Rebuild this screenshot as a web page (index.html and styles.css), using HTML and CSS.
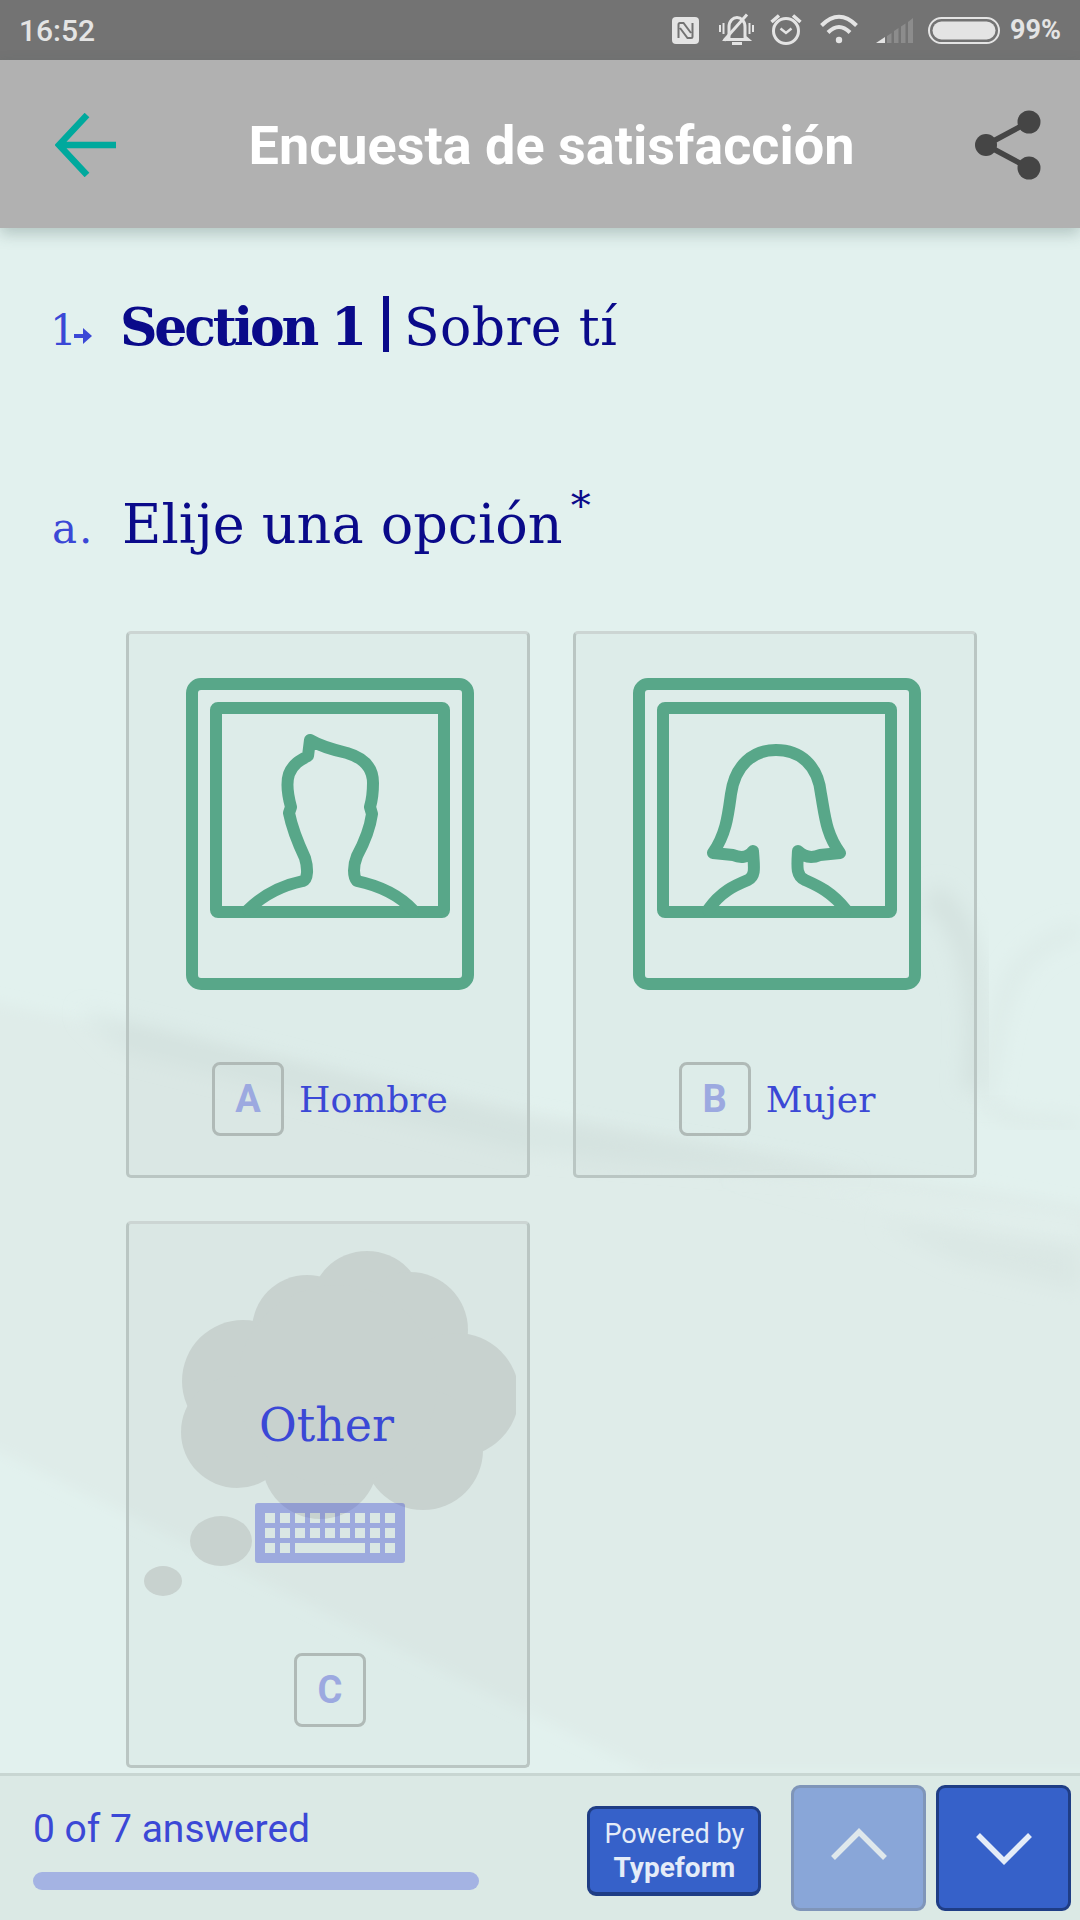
FILE: index.html
```html
<!DOCTYPE html>
<html lang="es">
<head>
    <meta charset="UTF-8">
    <meta name="viewport" content="width=device-width, initial-scale=1.0">
    <title>Encuesta de satisfacción</title>
    <link rel="stylesheet" href="styles.css">
</head>
<body>
<div class="page">
    <!-- washed out photo behind the form -->
    <svg class="backdrop" viewBox="0 0 1080 1920">
        <defs>
            <filter id="soft" x="-20%" y="-20%" width="140%" height="140%"><feGaussianBlur stdDeviation="10"/></filter>
            <filter id="softer" x="-20%" y="-20%" width="140%" height="140%"><feGaussianBlur stdDeviation="7"/></filter>
        </defs>
        <path d="M-40 995 L520 1112 L1120 1212 V1773 H650 L-40 1432Z" fill="#dfecE9" filter="url(#softer)"/>
        <path d="M80 1010 L520 1118 L860 1178 L520 1150 L120 1050Z" fill="#d9e7e4" filter="url(#soft)"/>
        <path d="M700 1178 L1080 1222 V1236 L800 1190Z" fill="#e3f1ee" filter="url(#soft)"/>
        <path d="M880 1222 L1080 1250 V1292 L960 1262Z" fill="#dae7e4" filter="url(#soft)"/>
        <path d="M930 895 C975 925 985 1000 975 1090" fill="none" stroke="#d9e7e4" stroke-width="26" filter="url(#soft)"/>
        <path d="M985 1100 C1000 1000 1005 950 1080 930" fill="none" stroke="#dbe9e6" stroke-width="12" filter="url(#soft)"/>
        <path d="M985 1100 C1010 1130 1040 1120 1080 1125" fill="none" stroke="#dce9e6" stroke-width="12" filter="url(#soft)"/>
    </svg>

    <div class="status-bar">
        <span class="clock">16:52</span>
        <div class="status-icons">
            <svg class="st-nfc" viewBox="0 0 37 60">
                <rect x="0" y="17" width="27" height="27" rx="4" fill="#e4e4e4"/>
                <path d="M6.500 38V24.500c0-1 .6-1.500 1.500-1.500h3.500l7.500 10M20.500 23V36.500c0 1-.6 1.500-1.500 1.500h-3.500l-7.500-10" fill="none" stroke="#737373" stroke-width="2"/>
            </svg>
            <svg class="st-bell" viewBox="0 0 41 60">
                <path d="M10 37V27c0-6 4-9.500 8-9.500s8 3.500 8 9.500V37l3 2.500H7Z" fill="none" stroke="#e4e4e4" stroke-width="3"/>
                <path d="M28 14.500L5 40.500" fill="none" stroke="#e4e4e4" stroke-width="3"/>
                <path d="M1 25v7M4.500 23v11M30.500 23v11M34 25v7" fill="none" stroke="#e4e4e4" stroke-width="2"/>
                <path d="M13 43.500h10" fill="none" stroke="#e4e4e4" stroke-width="3"/>
            </svg>
            <svg class="st-alarm" viewBox="0 0 40 60">
                <circle cx="16" cy="31" r="12.500" fill="none" stroke="#e4e4e4" stroke-width="3"/>
                <path d="M1.500 22L9 15.500M23 15.500L30.500 22" fill="none" stroke="#e4e4e4" stroke-width="3.500"/>
                <path d="M10.500 28.500L16 33L21.500 28.500" fill="none" stroke="#e4e4e4" stroke-width="2.500"/>
            </svg>
            <svg class="st-wifi" viewBox="0 0 46 60">
                <path d="M1.500 25.500Q19 8 36.500 25.500M8 32.500Q19 21.500 30 32.500" fill="none" stroke="#e4e4e4" stroke-width="4"/>
                <circle cx="19" cy="40" r="3.200" fill="#e4e4e4"/>
            </svg>
            <svg class="st-signal" viewBox="0 0 42 60">
                <path d="M0 43L9 37V43Z" fill="#e4e4e4"/>
                <path d="M11 36L15.500 33V43H11ZM18 31L22.500 28V43H18ZM25 26.500L29.500 23.500V43H25ZM32 22L37 18V43H32Z" fill="#8c8c8c"/>
            </svg>
            <svg class="st-battery" viewBox="0 0 72 60">
                <rect x="1" y="18" width="70" height="25" rx="12.500" fill="none" stroke="#e4e4e4" stroke-width="2"/>
                <rect x="4.500" y="21.500" width="63" height="18" rx="9" fill="#e4e4e4"/>
            </svg>
            <span class="battery-pct">99%</span>
        </div>
    </div>

    <header class="app-bar">
        <svg class="back-icon" viewBox="0 0 62 64">
            <path d="M61 32H4M32 2L4 32L32 62" fill="none" stroke="#00a99d" stroke-width="6.500"/>
        </svg>
        <h1 class="app-title">Encuesta de satisfacción</h1>
        <svg class="share-icon" viewBox="0 0 66 70">
            <path d="M11 35L54 12M11 35L54 58" fill="none" stroke="#454545" stroke-width="5.500"/>
            <circle cx="11" cy="35" r="11" fill="#454545"/>
            <circle cx="54" cy="12" r="11.500" fill="#454545"/>
            <circle cx="54" cy="58" r="11.500" fill="#454545"/>
        </svg>
    </header>

    <main class="form">
        <div class="q-row section-row">
            <span class="q-num">1<svg class="num-arrow" viewBox="0 0 18 18"><path d="M0 7H9V1L18 9L9 17V11H0Z" fill="#3b48d6"/></svg></span>
            <span class="q-text"><b>Section 1</b><i class="pipe"></i><span class="q-sub">Sobre tí</span></span>
        </div>
        <div class="q-row question-row">
            <span class="q-num">a.</span>
            <span class="q-text">Elije una opción<sup class="required">*</sup></span>
        </div>

        <div class="choices">
            <div class="choice">
                <svg class="photo" viewBox="0 0 288 312">
                    <rect x="6" y="6" width="276" height="300" rx="9"/>
                    <rect x="30" y="30" width="228" height="204" rx="2"/>
                    <path class="thin" d="M62 232C78 216 98 207 117 203C122 201 122 190 119 180C112 165 106 150 103 135L105 129C102 118 100 105 103 96C107 86 114 82 122 78L124 62C134 68 148 72 161 75C178 80 187 90 187 105C187 115 186 122 184 129L186 136C184 150 178 165 171 178C167 188 167 198 171 203C190 207 212 216 227 232"/>
                </svg>
                <div class="choice-label">
                    <span class="key">A</span>
                    <span class="label-text">Hombre</span>
                </div>
            </div>
            <div class="choice">
                <svg class="photo" viewBox="0 0 288 312">
                    <rect x="6" y="6" width="276" height="300" rx="9"/>
                    <rect x="30" y="30" width="228" height="204" rx="2"/>
                    <path class="thin" d="M75 232C88 213 103 207 115 202C123 198 121 189 120 173C115 180 107 180 100 177L80 175C93 156 95 138 98 116C102 87 120 72 143 72C167 72 185 87 188 116C192 138 193 156 207 175L187 177C180 180 172 180 165 173C164 189 163 198 172 202C183 207 198 213 213 232"/>
                </svg>
                <div class="choice-label">
                    <span class="key">B</span>
                    <span class="label-text">Mujer</span>
                </div>
            </div>
            <div class="choice choice-other">
                <svg class="cloud" viewBox="0 0 390 400">
                    <circle cx="117" cy="160" r="61"/>
                    <circle cx="181" cy="109" r="55"/>
                    <circle cx="241" cy="87" r="57"/>
                    <circle cx="284" cy="109" r="58"/>
                    <circle cx="331" cy="174" r="62"/>
                    <circle cx="111" cy="211" r="56"/>
                    <circle cx="194" cy="240" r="58"/>
                    <circle cx="297" cy="229" r="60"/>
                    <circle cx="211" cy="164" r="100"/>
                    <ellipse cx="95" cy="320" rx="31" ry="25"/>
                    <ellipse cx="37" cy="360" rx="19" ry="15"/>
                </svg>
                <span class="other-text">Other</span>
                <svg class="keyboard" viewBox="0 0 150 60">
                    <path fill-rule="evenodd" d="M3 0H147Q150 0 150 3V57Q150 60 147 60H3Q0 60 0 57V3Q0 0 3 0Z
                        M10 10h10v10h-10ZM25 10h10v10h-10ZM40 10h10v10h-10ZM55 10h10v10h-10ZM70 10h10v10h-10ZM85 10h10v10h-10ZM100 10h10v10h-10ZM115 10h10v10h-10ZM130 10h10v10h-10Z
                        M10 25h10v10h-10ZM25 25h10v10h-10ZM40 25h10v10h-10ZM55 25h10v10h-10ZM70 25h10v10h-10ZM85 25h10v10h-10ZM100 25h10v10h-10ZM115 25h10v10h-10ZM130 25h10v10h-10Z
                        M10 40h10v10h-10ZM25 40h10v10h-10ZM40 40h70v10h-70ZM115 40h10v10h-10ZM130 40h10v10h-10Z"/>
                </svg>
                <span class="key">C</span>
            </div>
        </div>
    </main>

    <footer class="footer">
        <div class="progress">
            <div class="progress-text">0 of 7 answered</div>
            <div class="progress-bar"></div>
        </div>
        <div class="powered">Powered by<b>Typeform</b></div>
        <div class="nav-btn nav-up">
            <svg viewBox="0 0 56 32"><path d="M2 30L28 4L54 30" fill="none" stroke="#dfe8ec" stroke-width="5.500"/></svg>
        </div>
        <div class="nav-btn nav-down">
            <svg viewBox="0 0 56 32"><path d="M2 2L28 28L54 2" fill="none" stroke="#e4ecf8" stroke-width="5.500"/></svg>
        </div>
    </footer>
</div>
</body>
</html>
```

FILE: styles.css
```css
* {
    box-sizing: border-box;
}
body {
    margin: 0;
    font-family: Roboto, sans-serif;
}
.page {
    position: relative;
    width: 1080px;
    height: 1920px;
    display: flex;
    flex-direction: column;
    overflow: hidden;
    background: #e2f1ee;
}
.backdrop {
    position: absolute;
    top: 0;
    left: 0;
    width: 1080px;
    height: 1920px;
}

/* status bar */
.status-bar {
    position: relative;
    height: 60px;
    display: flex;
    justify-content: space-between;
    align-items: center;
    padding: 0 19px;
    background: #737373;
    color: #e4e4e4;
}
.clock {
    font-size: 30px;
    font-weight: 500;
}
.status-icons {
    display: flex;
    align-items: center;
    gap: 10px;
}
.status-icons svg {
    height: 60px;
    display: block;
}
.st-nfc { width: 37px; }
.st-bell { width: 41px; }
.st-alarm { width: 40px; }
.st-wifi { width: 46px; }
.st-signal { width: 42px; }
.st-battery { width: 72px; }
.battery-pct {
    font-size: 27px;
    font-weight: 700;
}

/* app bar */
.app-bar {
    position: relative;
    height: 168px;
    display: flex;
    justify-content: space-between;
    align-items: center;
    padding: 0 39px 0 55px;
    background: #b1b1b1;
    box-shadow: 0 6px 14px rgba(60, 90, 85, 0.28);
}
.back-icon {
    width: 62px;
    height: 64px;
    margin-top: 2px;
}
.app-title {
    margin: 3px 0 0 11px;
    font-size: 54px;
    font-weight: 700;
    color: white;
}
.share-icon {
    width: 66px;
    height: 70px;
    margin-top: 1px;
}

/* form */
.form {
    position: relative;
    flex: 1;
    padding: 64px 0 0 52px;
    font-family: "DejaVu Serif", serif;
    color: #0a0a8a;
}
.q-row {
    display: flex;
    align-items: baseline;
    height: 70px;
    line-height: 70px;
}
.q-num {
    width: 70px;
    font-size: 42px;
    color: #3b48d6;
    white-space: nowrap;
}
.section-row .q-num {
    margin-left: -2px;
}
.question-row .q-num {
    letter-spacing: 2px;
}
.num-arrow {
    width: 18px;
    height: 18px;
    margin-left: -3px;
}
.q-text {
    font-size: 52px;
    white-space: nowrap;
}
.section-row b {
    letter-spacing: -3.200px;
}
.pipe {
    display: inline-block;
    width: 6px;
    height: 56px;
    margin: 0 15px 0 19px;
    vertical-align: -7px;
    background: #0a0a8a;
}
.q-sub {
    letter-spacing: 0.400px;
}
.question-row {
    margin-top: 128px;
}
.question-row .q-text {
    font-size: 54px;
}
.required {
    margin-left: 8px;
    font-size: 40px;
    line-height: 0;
    vertical-align: 24px;
}

.choices {
    display: grid;
    grid-template-columns: 404px 404px;
    grid-auto-rows: 547px;
    gap: 43px;
    margin: 71px 0 0 74px;
}
.choice {
    position: relative;
    display: flex;
    flex-direction: column;
    align-items: center;
    padding: 44px 0 0 4px;
    background: rgba(90, 110, 105, 0.037);
    border: 3px solid #bac6c3;
    border-top-color: #ccd5d3;
    border-radius: 5px;
}
.photo {
    width: 288px;
    height: 312px;
}
.photo rect, .photo path {
    fill: none;
    stroke: #58a789;
    stroke-width: 12;
}
.photo .thin {
    stroke-linejoin: round;
    stroke-linecap: round;
}
.choice-label {
    display: flex;
    align-items: center;
    gap: 15px;
    margin-top: 72px;
}
.key {
    position: relative;
    display: flex;
    justify-content: center;
    align-items: center;
    width: 72px;
    height: 74px;
    border: 3px solid #b0bab7;
    border-radius: 8px;
    font-family: Roboto, sans-serif;
    font-size: 38px;
    font-weight: 700;
    color: #9ca9e0;
}
.label-text {
    font-size: 36px;
    color: #3b48d6;
}
.cloud {
    position: absolute;
    top: -3px;
    left: -3px;
    width: 390px;
    height: 400px;
    fill: #c8d2cf;
}
.other-text {
    position: relative;
    margin: 122px 7px 0 0;
    font-size: 46px;
    line-height: 70px;
    color: #3b48d6;
}
.keyboard {
    position: relative;
    width: 150px;
    height: 60px;
    margin-top: 43px;
    fill: rgba(59, 72, 214, 0.38);
}
.choice-other .key {
    margin-top: 90px;
}

/* footer */
.footer {
    position: absolute;
    left: 0;
    right: 0;
    bottom: 0;
    height: 147px;
    display: flex;
    align-items: flex-start;
    padding: 9px 9px 0 33px;
    background: #dbe9e5;
    border-top: 3px solid #c8d6d2;
}
.progress {
    width: 447px;
    margin-top: 22px;
}
.progress-text {
    font-size: 39px;
    line-height: 44px;
    color: #3b48d6;
}
.progress-bar {
    height: 18px;
    margin-top: 21px;
    border-radius: 9px;
    background: #a4b3e3;
}
.powered {
    display: flex;
    flex-direction: column;
    align-items: center;
    justify-content: center;
    width: 174px;
    height: 90px;
    margin: 21px 30px 0 108px;
    background: #3661c9;
    border: 3px solid #1f3d85;
    border-bottom-width: 4px;
    border-radius: 9px;
    font-size: 27px;
    line-height: 34px;
    color: #e4ecf8;
}
.powered b {
    font-size: 28px;
}
.nav-btn {
    display: flex;
    align-items: center;
    justify-content: center;
    width: 135px;
    height: 126px;
    border: 3px solid;
    border-radius: 9px;
}
.nav-btn svg {
    width: 56px;
    height: 32px;
}
.nav-up {
    margin-right: 10px;
    background: #89a6d8;
    border-color: #7f95b9;
}
.nav-up svg {
    margin-top: -8px;
}
.nav-down {
    background: #3661c9;
    border-color: #1f3d85;
}
.nav-down svg {
    margin-top: 2px;
}
```
